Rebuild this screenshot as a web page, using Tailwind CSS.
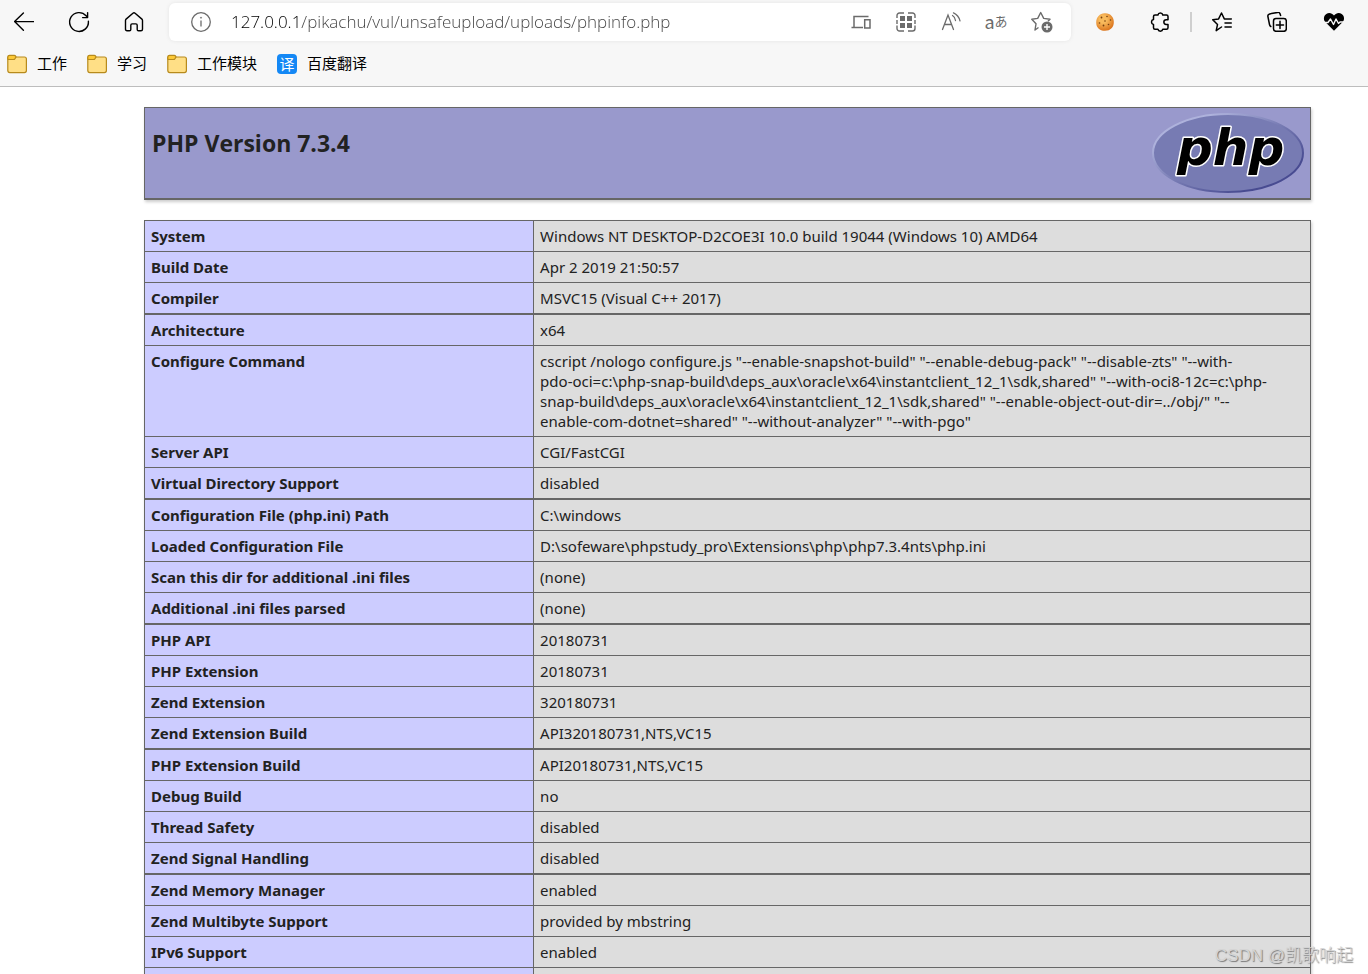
<!DOCTYPE html>
<html lang="zh-CN">
<head>
<meta charset="utf-8">
<title>phpinfo()</title>
<script src="https://cdn.jsdelivr.net/npm/@tailwindcss/browser@4"></script>
</head>
<body class="relative flex h-screen flex-col overflow-hidden bg-white font-['Noto_Sans','Noto_Sans_CJK_SC',sans-serif] text-[#222222]">
<header class="shrink-0 border-b border-[#bdbdbd] bg-[#f7f7f7] text-black">
  <div class="flex h-11 items-center pl-3.5 pr-6">
    <nav class="flex gap-[35px]" aria-label="Navigation">
      <button class="size-5" aria-label="Back"><svg viewBox="0 0 20 20" fill="none" stroke="currentColor" stroke-width="1.4" stroke-linecap="round" stroke-linejoin="round"><path d="M19.5 9.6H.6M9.4 1 .6 9.6l8.8 8.6"/></svg></button>
      <button class="size-5" aria-label="Refresh"><svg class="overflow-visible" viewBox="0 0 20 20" fill="none" stroke="currentColor" stroke-width="1.4" stroke-linecap="round" stroke-linejoin="round"><path d="M19.4 9.2a9.4 9.4 0 1 1-2.3-5.4l1.4 1.6M18.6.6v5h-5"/></svg></button>
      <button class="size-5" aria-label="Home"><svg viewBox="0 0 20 20" fill="none" stroke="currentColor" stroke-width="1.4" stroke-linejoin="round"><path d="M1.5 8.5c0-.6.2-1 .6-1.400L8.900 1.200c.7-.6 1.500-.6 2.200 0l6.800 5.900c.4.4.6.8.6 1.400v8.700c0 .9-.6 1.500-1.500 1.500h-2.500c-.8 0-1.300-.5-1.300-1.300v-4.200c0-.8-.5-1.300-1.300-1.300H8.100c-.8 0-1.300.5-1.300 1.300v4.200c0 .8-.5 1.300-1.300 1.300H3c-.9 0-1.500-.6-1.500-1.500z"/></svg></button>
    </nav>
    <div class="ml-[25px] flex h-[38px] flex-1 items-center rounded-md bg-white pl-[22px] pr-[18px] text-[#6b6b6b] shadow-[0_0_4px_rgba(0,0,0,0.08)]">
      <button class="size-5" aria-label="Site information"><svg viewBox="0 0 20 20" fill="none" stroke="currentColor" stroke-width="1.3"><circle cx="10" cy="10" r="9.300"/><path d="M10 8.500v6"/><circle cx="10" cy="5.700" r=".6" fill="currentColor" stroke-width=".6"/></svg></button>
      <input type="text" aria-label="Address" value="127.0.0.1/pikachu/vul/unsafeupload/uploads/phpinfo.php" class="ml-5 h-9 min-w-0 flex-1 bg-[linear-gradient(to_right,#000_68px,#404040_68px)] bg-clip-text pb-0.5 font-['Open_Sans',sans-serif] text-[17px] font-light text-transparent outline-none">
      <div class="flex items-center gap-[25px]">
        <button class="size-5" aria-label="Devices"><svg viewBox="0 0 20 20" fill="none" stroke="currentColor" stroke-width="1.500"><path d="M17.500 4.500H3v10.500M.5 15.500h11.500M13.700 7.700h5.300v8.300h-5.300z"/></svg></button>
        <button class="size-5" aria-label="Apps"><svg viewBox="0 0 20 20" fill="none" stroke="currentColor" stroke-width="1.400"><path d="M1 6V3.500A2.500 2.500 0 0 1 3.500 1H8M12 1h4.500A2.500 2.500 0 0 1 19 3.500V6M19 13.500v3a2.500 2.500 0 0 1-2.500 2.500H12M8 19H3.500A2.500 2.500 0 0 1 1 16.500v-3M1 8v4M19 8v4"/><path stroke="none" fill="currentColor" d="M4 4h5v5H4zM11 4h5v5h-5zM4 11h5v5H4zM11 11h5v5h-5z"/></svg></button>
        <button class="size-5" aria-label="Read aloud"><svg class="overflow-visible" viewBox="0 0 20 20" fill="none" stroke="currentColor" stroke-width="1.300" stroke-linecap="round"><path d="M1.500 17.500 7 3l5.500 14.500M3.400 12.500h7.200M11.500 3.500q2.500 1.500 3 5M12.500.8q5 2.200 6.500 8"/></svg></button>
        <button class="flex size-5 items-center justify-center pb-0.5 font-['Noto_Sans_CJK_JP',sans-serif] text-[13px] leading-5" aria-label="Translate"><span class="text-[18px]">a</span>あ</button>
        <button class="size-[22px]" aria-label="Add to favorites"><svg viewBox="0 0 22 22" fill="none" stroke="currentColor" stroke-width="1.400" stroke-linejoin="round"><path d="m7.500 16.500-3.500 2.500 1-6.200L.8 8.300l5.900-.9L9.700 1.500l3 5.900 6.300.9-2 2"/><circle cx="16" cy="16" r="5.500" fill="currentColor" stroke="none"/><path stroke="#fff" d="M16 13v6M13 16h6"/></svg></button>
      </div>
    </div>
    <div class="ml-6 flex items-center">
      <button class="size-5" aria-label="Cookie editor"><svg viewBox="0 0 20 20"><defs><radialGradient id="ck" cx=".4" cy=".35" r=".7"><stop offset=".3" stop-color="#f8ba5c"/><stop offset="1" stop-color="#d96f18"/></radialGradient></defs><path fill="url(#ck)" d="M1.200 10.500C1.200 5 5 1 10 1.200c5.500-.2 9 4 8.800 8.800.2 5-3.300 8.800-8.800 8.800s-8.800-3.300-8.800-8.300z"/><g fill="#76400f"><circle cx="6.500" cy="5.500" r=".9"/><circle cx="12" cy="4.500" r=".8"/><circle cx="10" cy="9" r=".8"/><circle cx="15.500" cy="8" r=".8"/><circle cx="4.500" cy="11" r=".8"/><circle cx="8.500" cy="13.500" r=".9"/><circle cx="13.500" cy="12.500" r=".8"/></g></svg></button>
      <button class="ml-[35px] size-5" aria-label="Extensions"><svg viewBox="0 0 20 20" fill="none" stroke="currentColor" stroke-width="1.500" stroke-linejoin="round"><path d="M5 3h2.900a2.500 2.500 0 0 1 4.900 0h3.700c.9 0 1.500.6 1.500 1.500v3.200h-1.800a2.300 2.300 0 0 0 0 4.700H18v3.300c0 .9-.6 1.500-1.500 1.500h-3.700a2.500 2.500 0 0 1-4.900 0H5c-.9 0-1.500-.6-1.500-1.500v-3.200a2.500 2.500 0 0 1 0-4.900V4.500C3.500 3.600 4.100 3 5 3z"/></svg></button>
      <span class="ml-5 h-5 w-0.5 bg-[#cfcfcf]"></span>
      <button class="ml-5 size-5" aria-label="Favorites"><svg viewBox="0 0 20 20" fill="none" stroke="currentColor" stroke-width="1.500" stroke-linejoin="round" stroke-linecap="round"><path d="m9.500 15-5.300 3.600 1.300-6L.7 7.700l5.900-.8L9.500 1l2.800 5.900h7M13 11h6.300M13 15h6.300"/></svg></button>
      <button class="ml-[35px] size-5" aria-label="Collections"><svg viewBox="0 0 20 20" fill="none" stroke="currentColor" stroke-width="1.500" stroke-linecap="round" stroke-linejoin="round"><rect x="6.500" y="6.500" width="12.800" height="12.800" rx="2.500"/><path d="M13 9.300v7.200M9.300 13h7.200M3.800 14.500C3 14 2.700 13.500 2.500 12.500L.9 4.500C.6 3 1.300 2.200 2.600 1.900l8-1.500c1.300-.2 2 .3 2.500 1.500l.5 1.500"/></svg></button>
      <button class="ml-[37px] size-5" aria-label="Browser essentials"><svg class="overflow-visible" viewBox="0 0 20 20"><path fill="currentColor" d="M10 18.800 1.300 10C-1 7.300-.2 3.500 2.300 1.900 5 .3 8 1 10 3.500 12 1 15 .3 17.700 1.900c2.500 1.600 3.300 5.400 1 8.100z"/><path fill="none" stroke="#f7f7f7" stroke-width="1.400" stroke-linejoin="round" d="M-1 10.500h5l2.500-3.500 3 5.500 2.500-5.500 2.500 4.500 1.500-1.500H21"/></svg></button>
    </div>
  </div>
  <nav class="flex h-[42px] items-start gap-5 pl-[7px] pt-2 text-[15px] leading-5" aria-label="Bookmarks">
    <a href="#" class="flex items-start gap-2.5"><svg class="mt-0.5 size-5" viewBox="0 0 20 20" stroke="#b78a1c" stroke-width="1.200"><path fill="#ffdf86" d="M.8 3h16.600q2 0 2 2v11.600q0 2-2 2H2.800q-2 0-2-2z"/><path fill="#fcc835" d="M.8 5V3.200Q.8 1.400 2.600 1.400h4.600q1 0 1.600 1L9 3 8 4.600q-.6.900-1.600.9H1.300z"/></svg><span class="pt-px">工作</span></a>
    <a href="#" class="flex items-start gap-2.5"><svg class="mt-0.5 size-5" viewBox="0 0 20 20" stroke="#b78a1c" stroke-width="1.200"><path fill="#ffdf86" d="M.8 3h16.600q2 0 2 2v11.600q0 2-2 2H2.800q-2 0-2-2z"/><path fill="#fcc835" d="M.8 5V3.200Q.8 1.400 2.600 1.400h4.600q1 0 1.600 1L9 3 8 4.600q-.6.900-1.600.9H1.300z"/></svg><span class="pt-px">学习</span></a>
    <a href="#" class="flex items-start gap-2.5"><svg class="mt-0.5 size-5" viewBox="0 0 20 20" stroke="#b78a1c" stroke-width="1.200"><path fill="#ffdf86" d="M.8 3h16.600q2 0 2 2v11.600q0 2-2 2H2.800q-2 0-2-2z"/><path fill="#fcc835" d="M.8 5V3.200Q.8 1.400 2.600 1.400h4.600q1 0 1.600 1L9 3 8 4.600q-.6.900-1.600.9H1.300z"/></svg><span class="pt-px">工作模块</span></a>
    <a href="#" class="flex items-start gap-2.5"><span class="mt-0.5 flex size-5 items-center justify-center rounded bg-[#1488f5] text-[15px] leading-5 text-white">译</span><span class="pt-px">百度翻译</span></a>
  </nav>
</header>
<main class="min-h-0 flex-1 overflow-hidden pl-36 pr-[57px] pt-5">
  <div class="flex items-start justify-between border border-b-2 border-[#666666] bg-[#9999cc] pb-[5px] pl-[7px] pr-1.5 pt-[5px] shadow-[1px_2px_3px_#cccccc]">
    <h1 class="pt-3.5 text-[23px] leading-8 font-bold font-['Open_Sans',sans-serif]">PHP Version 7.3.4</h1>
    <a href="#" aria-label="PHP"><svg class="h-20 w-[152px]" viewBox="0 0 152 80">
      <defs><linearGradient id="rim" x1="0" y1="0" x2="1" y2="1"><stop offset=".2" stop-color="#aeb2dc"/><stop offset=".5" stop-color="#777bb3"/><stop offset=".8" stop-color="#484b91"/></linearGradient></defs>
      <ellipse cx="76" cy="40" rx="75" ry="39" fill="#777bb3" stroke="url(#rim)" stroke-width="2"/>
      <text x="25" y="52" font-family="DejaVu Sans" font-size="50" font-weight="700" font-style="italic" fill="#000" stroke="#fff" stroke-width="3" stroke-linejoin="round" paint-order="stroke">php</text>
    </svg></a>
  </div>
  <table class="mt-5 w-full table-fixed border-separate border-spacing-0 border-x border-t border-[#666666] text-left align-top text-[15px] leading-5 shadow-[1px_2px_3px_#cccccc] [&_td]:border-b [&_td]:border-[#666666] [&_td]:bg-[#dddddd] [&_td]:px-1.5 [&_td]:py-[5px] [&_th]:border-r [&_th]:border-b [&_th]:border-[#666666] [&_th]:bg-[#ccccff] [&_th]:px-1.5 [&_th]:py-[5px] [&_th]:align-top [&_th]:font-bold">
    <colgroup><col class="w-[33.4%]"><col></colgroup>
    <tbody>
      <tr><th scope="row">System</th><td>Windows NT DESKTOP-D2COE3I 10.0 build 19044 (Windows 10) AMD64</td></tr>
      <tr><th scope="row">Build Date</th><td>Apr 2 2019 21:50:57</td></tr>
      <tr class="[&>*]:border-b-2!"><th scope="row">Compiler</th><td>MSVC15 (Visual C++ 2017)</td></tr>
      <tr><th scope="row">Architecture</th><td>x64</td></tr>
      <tr><th scope="row">Configure Command</th><td>cscript /nologo configure.js "--enable-snapshot-build" "--enable-debug-pack" "--disable-zts" "--with-<br>pdo-oci=c:\php-snap-build\deps_aux\oracle\x64\instantclient_12_1\sdk,shared" "--with-oci8-12c=c:\php-<br>snap-build\deps_aux\oracle\x64\instantclient_12_1\sdk,shared" "--enable-object-out-dir=../obj/" "--<br>enable-com-dotnet=shared" "--without-analyzer" "--with-pgo"</td></tr>
      <tr><th scope="row">Server API</th><td>CGI/FastCGI</td></tr>
      <tr class="[&>*]:border-b-2!"><th scope="row">Virtual Directory Support</th><td>disabled</td></tr>
      <tr><th scope="row">Configuration File (php.ini) Path</th><td>C:\windows</td></tr>
      <tr><th scope="row">Loaded Configuration File</th><td>D:\sofeware\phpstudy_pro\Extensions\php\php7.3.4nts\php.ini</td></tr>
      <tr><th scope="row">Scan this dir for additional .ini files</th><td>(none)</td></tr>
      <tr class="[&>*]:border-b-2!"><th scope="row">Additional .ini files parsed</th><td>(none)</td></tr>
      <tr><th scope="row">PHP API</th><td>20180731</td></tr>
      <tr><th scope="row">PHP Extension</th><td>20180731</td></tr>
      <tr><th scope="row">Zend Extension</th><td>320180731</td></tr>
      <tr class="[&>*]:border-b-2!"><th scope="row">Zend Extension Build</th><td>API320180731,NTS,VC15</td></tr>
      <tr><th scope="row">PHP Extension Build</th><td>API20180731,NTS,VC15</td></tr>
      <tr><th scope="row">Debug Build</th><td>no</td></tr>
      <tr><th scope="row">Thread Safety</th><td>disabled</td></tr>
      <tr class="[&>*]:border-b-2!"><th scope="row">Zend Signal Handling</th><td>disabled</td></tr>
      <tr><th scope="row">Zend Memory Manager</th><td>enabled</td></tr>
      <tr><th scope="row">Zend Multibyte Support</th><td>provided by mbstring</td></tr>
      <tr><th scope="row">IPv6 Support</th><td>enabled</td></tr>
      <tr class="h-8"><th></th><td></td></tr>
    </tbody>
  </table>
</main>
<p class="absolute right-[15px] bottom-1.5 font-['Liberation_Sans','Noto_Sans_CJK_SC',sans-serif] text-[17px] leading-6 font-light text-[#d4d4d4] [text-shadow:1px_1px_1px_#777777]">CSDN @凯歌响起</p>
</body>
</html>
